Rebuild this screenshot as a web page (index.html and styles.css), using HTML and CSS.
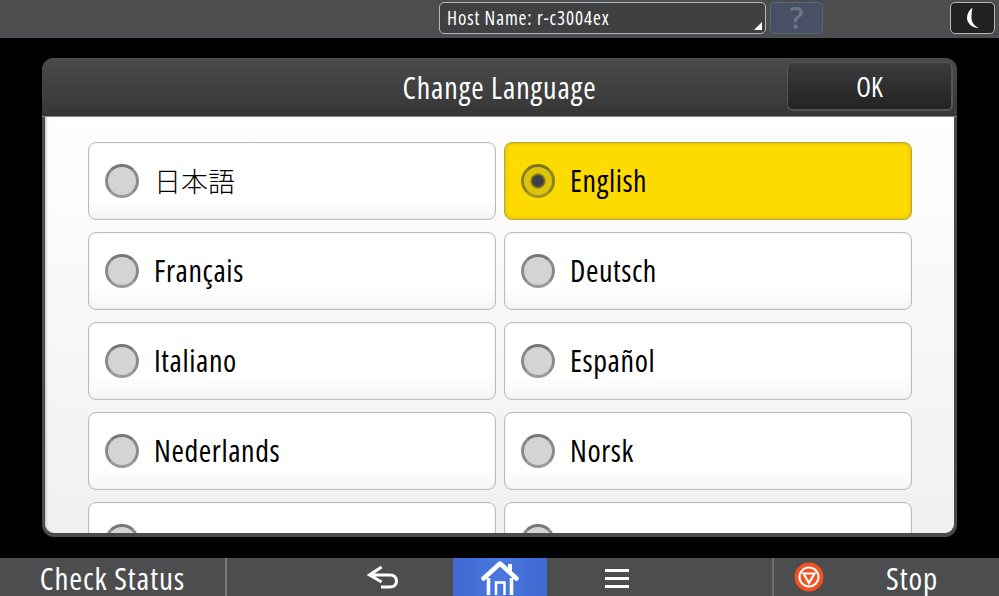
FILE: index.html
```html
<!DOCTYPE html>
<html lang="en">
<head>
    <meta charset="UTF-8">
    <title>Change Language</title>
    <link rel="stylesheet" href="styles.css">
</head>
<body>
    <div class="screen">
        <!-- Top status bar -->
        <header class="top-bar">
            <div class="host-box">Host Name: r-c3004ex<span class="host-corner"></span></div>
            <div class="help-btn">?</div>
            <div class="moon-btn">
                <svg width="14" height="22" viewBox="0 0 14 22"><path d="M6 1 C2.5 4 1 7.5 1 11 C1 16 6 21 13 21 C8.5 19 5.5 15.5 5.5 11 C5.5 8 5.5 4 6.5 1 Z" fill="#fff"/></svg>
            </div>
        </header>

        <main class="stage">
            <div class="dialog">
                <div class="dialog-head">
                    <div class="dialog-title">Change Language</div>
                    <div class="ok-btn">OK</div>
                </div>
                <div class="dialog-body">
                    <div class="lang-grid">
                        <div class="lang"><span class="radio"></span><span class="lang-name cjk">日本語</span></div>
                        <div class="lang selected"><span class="radio"></span><span class="lang-name">English</span></div>
                        <div class="lang"><span class="radio"></span><span class="lang-name">Français</span></div>
                        <div class="lang"><span class="radio"></span><span class="lang-name">Deutsch</span></div>
                        <div class="lang"><span class="radio"></span><span class="lang-name">Italiano</span></div>
                        <div class="lang"><span class="radio"></span><span class="lang-name">Español</span></div>
                        <div class="lang"><span class="radio"></span><span class="lang-name">Nederlands</span></div>
                        <div class="lang"><span class="radio"></span><span class="lang-name">Norsk</span></div>
                        <div class="lang"><span class="radio"></span><span class="lang-name last-row">Dansk</span></div>
                        <div class="lang"><span class="radio"></span><span class="lang-name last-row">Svenska</span></div>
                    </div>
                </div>
            </div>
        </main>

        <!-- Bottom navigation -->
        <footer class="bottom-bar">
            <div class="check-status">Check Status</div>
            <div class="nav-back">
                <svg width="32" height="28" viewBox="0 0 32 28"><path d="M14.6 4 L2.5 12 L14.6 19 M3 12 H23 C27 12 29.5 14.5 29.5 18 C29.5 21.5 27 24 23 24 H14" fill="none" stroke="#fff" stroke-width="3"/></svg>
            </div>
            <div class="nav-home">
                <svg width="38" height="36" viewBox="0 0 38 36"><path d="M2.5 19.5 L19 4.5 L35.5 19.5" fill="none" stroke="#fff" stroke-width="4.5" stroke-linecap="round" stroke-linejoin="round"/><path d="M27 5 H31 V14 L27 10 Z" fill="#fff"/><path d="M7.5 19 V36 M30.5 19 V36" stroke="#fff" stroke-width="3.5"/><path d="M15 36 V23.5 H23.5 V36" fill="none" stroke="#fff" stroke-width="2.5"/></svg>
            </div>
            <div class="nav-menu"><span class="menu-icon"></span></div>
            <div class="nav-stop">
                <svg class="stop-icon" width="30" height="30" viewBox="0 0 30 30"><circle cx="15" cy="15" r="14.5" fill="#f4511e"/><circle cx="15" cy="15" r="9.5" fill="none" stroke="#fff" stroke-width="2.2"/><path d="M9.5 11.5 H20.5 L15 21 Z" fill="none" stroke="#fff" stroke-width="2.2"/></svg>
                <span class="stop-label">Stop</span>
            </div>
        </footer>
    </div>
</body>
</html>
```

FILE: styles.css
```css
body {
    margin: 0;
    background: #000;
    font-family: "Open Sans", "Noto Sans CJK JP", sans-serif;
    font-stretch: 75%;
    overflow: hidden;
}

.screen {
    width: 999px;
    height: 596px;
    display: flex;
    flex-direction: column;
    background: #000;
}

.top-bar {
    height: 38px;
    background: #4c4d4f;
    display: flex;
    align-items: flex-start;
    padding-top: 2px;
    box-sizing: border-box;
}

.host-box {
    position: relative;
    width: 327px;
    height: 32px;
    margin-left: 439px;
    box-sizing: border-box;
    border: 1px solid #b5b6b8;
    border-radius: 5px;
    background: #3f4042;
    color: #fff;
    font-size: 19px;
    letter-spacing: 0.9px;
    line-height: 30px;
    padding-left: 7px;
}

.host-corner {
    position: absolute;
    right: 3px;
    bottom: 3px;
    border-style: solid;
    border-width: 0 0 8px 8px;
    border-color: transparent transparent #fff transparent;
}

.help-btn {
    width: 53px;
    height: 32px;
    margin-left: 4px;
    box-sizing: border-box;
    border: 1px solid #5d6675;
    border-radius: 4px;
    background: #485066;
    color: #6d7484;
    font-size: 30px;
    font-weight: 600;
    font-stretch: 100%;
    line-height: 30px;
    text-align: center;
}

.moon-btn {
    width: 45px;
    height: 32px;
    margin-left: 127px;
    box-sizing: border-box;
    border: 1px solid #b5b6b8;
    border-radius: 5px;
    background: #222;
    display: flex;
    align-items: center;
    justify-content: center;
}

.stage {
    flex: 1;
    padding: 20px 42px 21px 42px;
    min-height: 0;
}

.dialog {
    width: 915px;
    height: 479px;
    box-sizing: border-box;
    background: #4a4a4a;
    border-radius: 12px;
    padding: 0 3px 4px 3px;
    display: flex;
    flex-direction: column;
    overflow: hidden;
}

.dialog-head {
    position: relative;
    height: 58px;
    flex: none;
    margin: 0 -3px;
    background: linear-gradient(#4b4b4b, #363636);
    border-bottom: 1px solid #888;
    display: flex;
    align-items: center;
    justify-content: center;
}

.dialog-title {
    color: #fff;
    font-size: 30px;
    letter-spacing: 0.9px;
}

.ok-btn {
    position: absolute;
    right: 4px;
    top: 4px;
    width: 166px;
    height: 49px;
    box-sizing: border-box;
    border: 1px solid #555;
    border-bottom-width: 2px;
    border-right-width: 2px;
    border-radius: 6px;
    background: linear-gradient(#3c3c3c, #232323);
    color: #fff;
    font-size: 27px;
    line-height: 48px;
    text-align: center;
}

.dialog-body {
    flex: 1;
    min-height: 0;
    overflow: hidden;
    border-radius: 0 0 9px 9px;
    background: linear-gradient(#fff, #f0f0f0);
    box-shadow: inset 3px 0 3px -2px #bbb;
    padding: 25px 43px 0 43px;
}

.lang-grid {
    display: grid;
    grid-template-columns: 408px 408px;
    grid-auto-rows: 78px;
    column-gap: 8px;
    row-gap: 12px;
}

.lang {
    box-sizing: border-box;
    border: 1px solid #bcbcbc;
    border-radius: 8px;
    background: linear-gradient(#fff 70%, #f6f6f6);
    box-shadow: inset 0 0 2px #ddd;
    display: flex;
    align-items: center;
    padding-left: 16px;
    color: #000;
    font-size: 30px;
    letter-spacing: 0.6px;
}

.lang.selected {
    background: #fedb00;
    border-color: #b9a436;
    box-shadow: inset 0 0 4px #c9ad10;
}

.radio {
    width: 34px;
    height: 34px;
    flex: none;
    box-sizing: border-box;
    border: 3px solid;
    border-color: #777 #8a8a8a #9a9a9a #8a8a8a;
    border-radius: 50%;
    background: #d4d4d4;
    margin-right: 15px;
}

.lang-name {
    margin-top: -2px;
}

.lang-name.last-row {
    margin-top: 9px;
}

.selected .radio {
    background: radial-gradient(circle, #3c4048 0 5px, #8c7f14 7px, #dcc40a 8px);
    border-color: #7f7520 #8c8220 #a39618 #8c8220;
}

.cjk {
    font-family: "Noto Sans CJK JP", sans-serif;
    font-weight: 300;
    font-size: 27px;
    letter-spacing: 0;
}

.bottom-bar {
    height: 38px;
    flex: none;
    background: #4c4d4f;
    display: flex;
    color: #fff;
}

.check-status {
    width: 227px;
    box-sizing: border-box;
    border-right: 2px solid #77787a;
    font-size: 31px;
    letter-spacing: 0.9px;
    line-height: 40px;
    text-align: center;
}

.nav-back {
    width: 226px;
    display: flex;
    align-items: center;
    justify-content: center;
    box-sizing: border-box;
    padding-left: 112px;
    padding-right: 26px;
}

.nav-home {
    width: 94px;
    background: linear-gradient(90deg, #3f68d0, #4a78e0 50%, #3f68d0);
    display: flex;
    align-items: center;
    justify-content: center;
}

.nav-menu {
    width: 227px;
    display: flex;
    align-items: center;
    justify-content: center;
    box-sizing: border-box;
    border-right: 2px solid #6c6d6f;
    padding-right: 86px;
    padding-top: 3px;
}

.menu-icon {
    width: 24px;
    height: 3px;
    background: #fff;
    box-shadow: 0 -8px 0 #fff, 0 8px 0 #fff;
}

.nav-stop {
    flex: 1;
    display: flex;
    align-items: center;
    padding-left: 20px;
}

.stop-label {
    font-size: 31px;
    letter-spacing: 0.9px;
    margin-left: 62px;
    margin-top: 1px;
}
```
